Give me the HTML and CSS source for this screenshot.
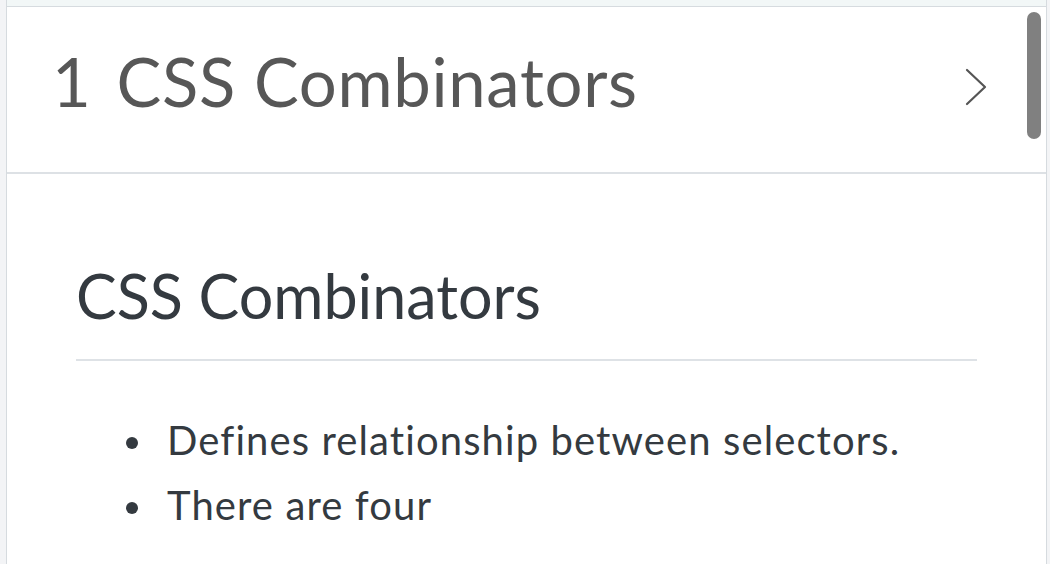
FILE: index.html
```html
<!DOCTYPE html>
<html>
<head>
<meta charset="utf-8">
<link rel="stylesheet" href="styles.css">
</head>
<body>
<div class="panel">
  <div class="prev-item"></div>
  <div class="acc-header">
    <div class="acc-title"><span class="num">1</span>CSS Combinators</div>
    <svg class="chevron" width="22" height="38" viewBox="0 0 22 38"><polyline points="2,2 20,19 2,36" fill="none" stroke="#555" stroke-width="2.2" stroke-linecap="round" stroke-linejoin="round"/></svg>
  </div>
  <div class="acc-body">
    <h2 class="section-title">CSS Combinators</h2>
    <ul class="points">
      <li>Defines relationship between selectors.</li>
      <li>There are four</li>
    </ul>
  </div>
  <div class="thumb"></div>
</div>
</body>
</html>
```
FILE: styles.css
```css
html, body {
  margin: 0;
  padding: 0;
  height: 100%;
  overflow: hidden;
}
body {
  background: #f3f4f6;
  font-family: Lato, "Noto Sans", sans-serif;
}
.panel {
  position: relative;
  margin-left: 6px;
  margin-right: 3px;
  background: #fff;
  border-left: 1px solid #d6dbdf;
  border-right: 1px solid #d6dbdf;
  height: 100%;
}
.prev-item {
  height: 6px;
  background: #f2f7f7;
  border-bottom: 1px solid #d6dbdf;
}
.acc-header {
  height: 165px;
  border-bottom: 2px solid #dde1e5;
  display: flex;
  align-items: center;
  justify-content: space-between;
  padding: 0 59px 0 45px;
}
.acc-title {
  font-size: 67px;
  line-height: 1;
  color: #575757;
  margin-bottom: 17px;
  letter-spacing: 0.7px;
}
.num {
  margin-right: 25px;
}
.chevron {
  margin-bottom: 5px;
}
.acc-body {
  padding: 85px 69px 0 69px;
  color: #343a40;
}
.section-title {
  margin: 0;
  font-weight: 400;
  font-size: 61px;
  line-height: 1.2;
  padding-bottom: 27px;
  border-bottom: 2px solid #dee2e6;
}
.points {
  list-style: none;
  margin: 47px 0 0 0;
  padding-left: 50px;
  font-size: 40px;
  line-height: 65px;
  letter-spacing: 1.1px;
}
.points li {
  display: flex;
  align-items: center;
}
.points li::before {
  content: "";
  flex: none;
  width: 12px;
  height: 12px;
  border-radius: 50%;
  background: #343a40;
  margin-right: 29px;
  margin-top: 4px;
}
.thumb {
  position: absolute;
  top: 12px;
  right: 5px;
  width: 14px;
  height: 127px;
  border-radius: 7px;
  background: #808080;
}
```
